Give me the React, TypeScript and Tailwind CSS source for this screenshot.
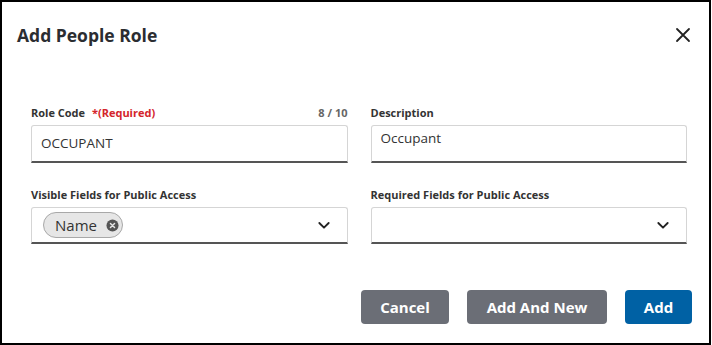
import React from 'react';

const ChevronDown = () => (
  <svg width="16" height="16" viewBox="0 0 24 24" fill="none" stroke="#222" strokeWidth="2.8" strokeLinecap="round" strokeLinejoin="round">
    <path d="M5 9l7 7 7-7" />
  </svg>
);

const Label: React.FC<{ children: React.ReactNode }> = ({ children }) => (
  <div className="text-[11px] font-bold text-[#333] leading-[14px]">{children}</div>
);

export default function App() {
  return (
    <div className="w-[711px] h-[345px] border-2 border-black bg-white font-['Open_Sans',sans-serif] flex flex-col">
      {/* header */}
      <div className="flex items-center justify-between pl-[15px] pr-[18px] pt-[21px]">
        <h2 className="text-[17.5px] font-bold text-[#2b2d31] leading-6">Add People Role</h2>
        <svg width="16" height="16" viewBox="0 0 16 16" stroke="#222" strokeWidth="1.8" strokeLinecap="round">
          <path d="M2 2l12 12M14 2L2 14" />
        </svg>
      </div>

      {/* form */}
      <div className="grid grid-cols-2 gap-x-[23px] gap-y-[25px] pl-[29px] pr-[22px] pt-[59px]">
        <div>
          <div className="flex justify-between">
            <Label>
              Role Code <span className="ml-1 text-[#d4252b]">*(Required)</span>
            </Label>
            <span className="text-[11px] font-bold text-[#666] leading-[14px]">8 / 10</span>
          </div>
          <div className="mt-[5px] h-[38px] border border-[#d5d5d5] border-b-2 border-b-[#555] rounded-t-[3px] flex items-center px-[9px] text-[13.5px] text-[#333]">
            OCCUPANT
          </div>
        </div>
        <div>
          <Label>Description</Label>
          <div className="mt-[5px] h-[38px] border border-[#d5d5d5] border-b-2 border-b-[#555] rounded-t-[3px] px-[9px] pt-[2px] text-[13.5px] text-[#333]">
            Occupant
          </div>
        </div>
        <div>
          <Label>Visible Fields for Public Access</Label>
          <div className="mt-[5px] h-[37px] border border-[#d5d5d5] border-b-2 border-b-[#555] rounded-t-[3px] flex items-center justify-between pl-[11px] pr-[15px]">
            <span className="flex items-center gap-[9px] h-[26px] pl-[11px] pr-[3px] rounded-full bg-[#e6e6e6] border border-[#a8a8a8] text-[15px] text-[#333]">
              Name
              <svg width="13" height="13" viewBox="0 0 14 14">
                <circle cx="7" cy="7" r="6.5" fill="#555" />
                <path d="M4.8 4.8l4.4 4.4M9.2 4.8l-4.4 4.4" stroke="#e6e6e6" strokeWidth="1.6" strokeLinecap="round" />
              </svg>
            </span>
            <ChevronDown />
          </div>
        </div>
        <div>
          <Label>Required Fields for Public Access</Label>
          <div className="mt-[5px] h-[37px] border border-[#d5d5d5] border-b-2 border-b-[#555] rounded-t-[3px] flex items-center justify-end pr-[15px]">
            <ChevronDown />
          </div>
        </div>
      </div>

      {/* footer */}
      <div className="flex justify-end gap-[18px] pr-[17px] pt-[46px]">
        <button className="h-[34px] w-[88px] rounded-[4px] bg-[#6b6e76] text-white text-[15px] font-bold">Cancel</button>
        <button className="h-[34px] w-[140px] rounded-[4px] bg-[#6b6e76] text-white text-[15px] font-bold">Add And New</button>
        <button className="h-[34px] w-[67px] rounded-[4px] bg-[#0061a4] text-white text-[15px] font-bold">Add</button>
      </div>
    </div>
  );
}
